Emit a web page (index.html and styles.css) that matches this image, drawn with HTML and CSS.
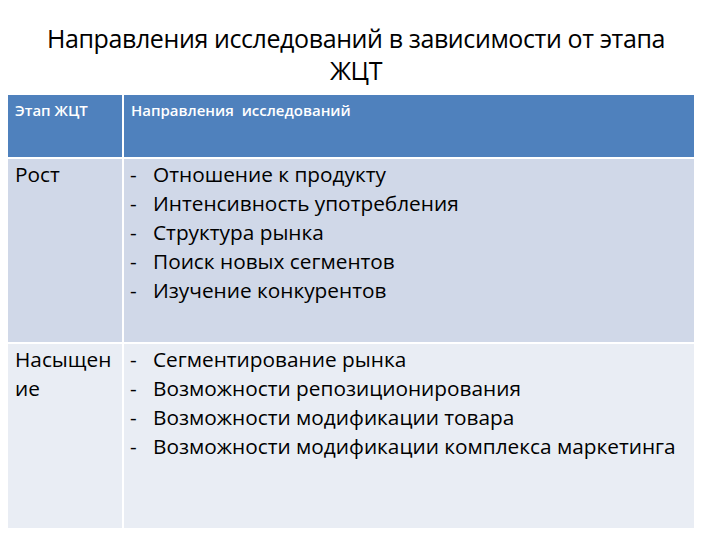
FILE: index.html
```html
<!DOCTYPE html>
<html lang="ru">
<head>
<meta charset="utf-8">
<link rel="stylesheet" href="styles.css">
</head>
<body>
<div class="slide">
  <h1 class="title">Направления исследований в зависимости от этапа<br>ЖЦТ</h1>
  <div class="table">
    <div class="cell head c1">Этап ЖЦТ</div>
    <div class="cell head c2">Направления&nbsp; исследований</div>
    <div class="cell r1 c1">Рост</div>
    <div class="cell r1 c2">
      <ul class="list">
        <li>Отношение к продукту</li>
        <li>Интенсивность употребления</li>
        <li>Структура рынка</li>
        <li>Поиск новых сегментов</li>
        <li>Изучение конкурентов</li>
      </ul>
    </div>
    <div class="cell r2 c1">Насыщен ие</div>
    <div class="cell r2 c2">
      <ul class="list">
        <li>Сегментирование рынка</li>
        <li>Возможности репозиционирования</li>
        <li>Возможности модификации товара</li>
        <li>Возможности модификации комплекса маркетинга</li>
      </ul>
    </div>
  </div>
</div>
</body>
</html>
```
FILE: styles.css
```css
html, body {
  margin: 0;
  padding: 0;
  background: #ffffff;
}
.slide {
  width: 720px;
  height: 540px;
  box-sizing: border-box;
  padding: 0 26px 0 8px;
  display: flex;
  flex-direction: column;
}
.title {
  margin: 0;
  padding-top: 22px;
  padding-left: 10px;
  height: 95px;
  box-sizing: border-box;
  font-family: "Open Sans", sans-serif;
  font-weight: normal;
  font-size: 25px;
  letter-spacing: -0.4px;
  line-height: 32px;
  text-align: center;
  color: #000000;
}
.table {
  display: grid;
  grid-template-columns: 114px 1fr;
  grid-template-rows: 62px 183px 184px;
  gap: 2px 2px;
  background: #ffffff;
}
.cell {
  font-family: "Open Sans", sans-serif;
  color: #000000;
  padding: 0 7px;
}
.head {
  background: #4f81bd;
  color: #ffffff;
  font-weight: 600;
  font-size: 15px;
  line-height: 20px;
  padding-top: 5px;
}
.r1 { background: #d0d8e8; }
.r2 { background: #e9edf4; }
.r1, .r2 {
  font-size: 20.8px;
  line-height: 29px;
  padding-top: 1px;
}
.c2.r1, .c2.r2 {
  padding-left: 6px;
}
.list {
  margin: 0;
  padding: 0;
  list-style: none;
}
.list li {
  position: relative;
  padding-left: 23px;
}
.list li::before {
  content: "-";
  position: absolute;
  left: 0;
}
```
